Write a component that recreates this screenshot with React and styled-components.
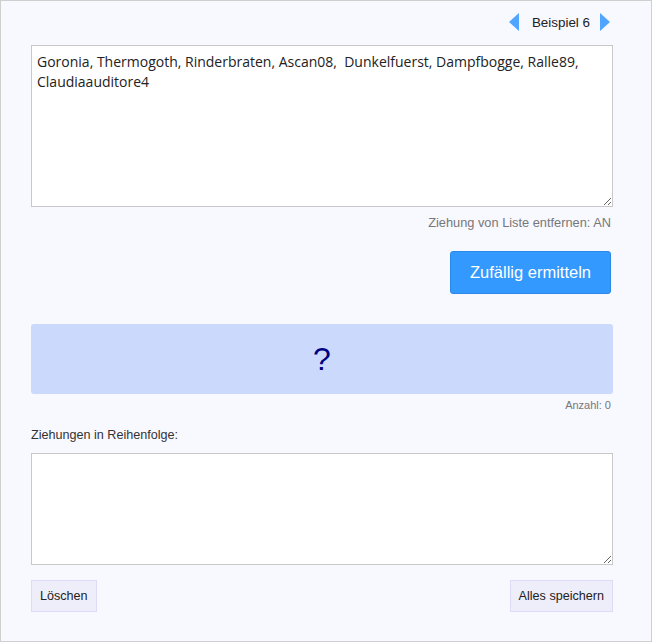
import styled, { createGlobalStyle } from "styled-components";

const GlobalStyle = createGlobalStyle`
  html, body {
    margin: 0;
    padding: 0;
    background: #fff;
  }
  * {
    box-sizing: border-box;
  }
`;

export default function App() {
  return (
    <>
      <GlobalStyle />
      <Frame>
        <Pager>
          <Arrow $dir="left" aria-label="zurück" />
          <PagerLabel>Beispiel 6</PagerLabel>
          <Arrow $dir="right" aria-label="weiter" />
        </Pager>

        <NameBox
          $height={162}
          spellCheck
          defaultValue="Goronia, Thermogoth, Rinderbraten, Ascan08,  Dunkelfuerst, Dampfbogge, Ralle89, Claudiaauditore4"
        />
        <Hint>Ziehung von Liste entfernen: AN</Hint>

        <ActionRow>
          <PrimaryButton>Zufällig ermitteln</PrimaryButton>
        </ActionRow>

        <ResultBox>?</ResultBox>
        <Count>Anzahl: 0</Count>

        <Label>Ziehungen in Reihenfolge:</Label>
        <NameBox $height={112} />

        <FooterRow>
          <SoftButton>Löschen</SoftButton>
          <SoftButton>Alles speichern</SoftButton>
        </FooterRow>
      </Frame>
    </>
  );
}

const Frame = styled.div`
  width: 652px;
  height: 642px;
  border: 1px solid #cfcfcf;
  background: #f8f8ff;
  padding: 10px 38px 0 30px;
  font-family: "Liberation Sans", Arial, sans-serif;
  display: flex;
  flex-direction: column;
`;

const Pager = styled.div`
  display: flex;
  align-items: center;
  justify-content: flex-end;
  height: 22px;
  margin-right: 3px;
  margin-bottom: 12px;
`;

const Arrow = styled.button`
  width: 0;
  height: 0;
  padding: 0;
  background: none;
  border-style: solid;
  border-width: 9px 0;
  border-color: transparent;
  cursor: pointer;
  ${({ $dir }) =>
    $dir === "left"
      ? `border-right: 10px solid #4fa5ff; margin-right: 13px;`
      : `border-left: 10px solid #4fa5ff; margin-left: 10px;`}
`;

const PagerLabel = styled.span`
  font-size: 13.4px;
  color: #222;
`;

const NameBox = styled.textarea`
  display: block;
  width: 582px;
  height: ${({ $height }) => $height}px;
  border: 1px solid #c8c8c8;
  background: #fff;
  padding: 6px 5px;
  margin: 0;
  font-family: "Open Sans", "Noto Sans", sans-serif;
  font-size: 14px;
  line-height: 20px;
  color: #222;
  resize: vertical;
  outline: none;
`;

const Hint = styled.div`
  text-align: right;
  font-size: 12.8px;
  color: #777;
  margin: 8px 2px 0 0;
  line-height: 15px;
`;

const ActionRow = styled.div`
  display: flex;
  justify-content: flex-end;
  margin: 21px 2px 0 0;
`;

const PrimaryButton = styled.button`
  width: 161px;
  height: 43px;
  background: #3399ff;
  border: 1px solid #2b88e8;
  border-radius: 3px;
  color: #fff;
  font-family: "Liberation Sans", Arial, sans-serif;
  font-size: 16.5px;
  cursor: pointer;
`;

const ResultBox = styled.div`
  margin-top: 30px;
  width: 582px;
  height: 70px;
  border-radius: 3px;
  background: #cad9fc;
  color: #000080;
  font-size: 32px;
  display: flex;
  align-items: center;
  justify-content: center;
`;

const Count = styled.div`
  text-align: right;
  font-size: 11px;
  color: #777;
  margin: 5px 2px 0 0;
  line-height: 13px;
`;

const Label = styled.div`
  font-size: 12.6px;
  color: #333;
  margin: 16px 0 10px;
  line-height: 15px;
`;

const FooterRow = styled.div`
  display: flex;
  justify-content: space-between;
  width: 582px;
  margin-top: 15px;
`;

const SoftButton = styled.button`
  height: 32px;
  padding: 0 8px;
  background: #eeeefb;
  border: 1px solid #dcdcf8;
  color: #222;
  font-family: "Liberation Sans", Arial, sans-serif;
  font-size: 12.6px;
  cursor: pointer;
`;
